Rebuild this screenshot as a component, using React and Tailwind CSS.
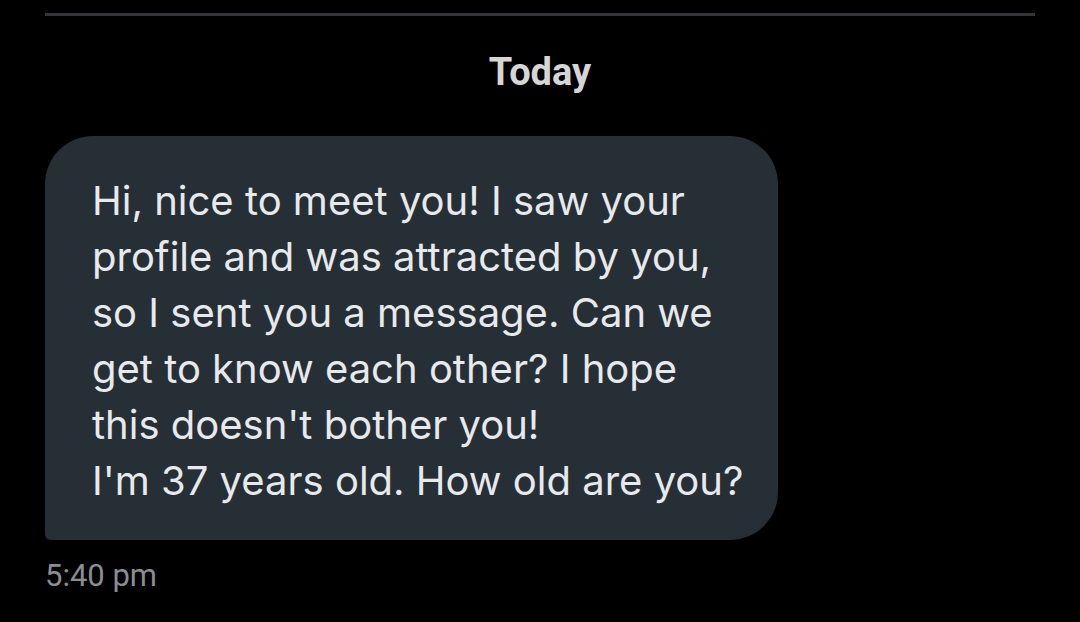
export default function App() {
  return (
    <div className="w-[1080px] h-[622px] overflow-hidden bg-black flex flex-col px-[45px]">
      {/* divider */}
      <div className="mt-[13px] h-[3px] bg-[#333639]" />

      {/* day label */}
      <div className="mt-[34px] text-center text-[38px] font-bold leading-[44px] text-[#d6d6d6] font-['Roboto','Liberation_Sans',sans-serif]">
        Today
      </div>

      {/* message bubble */}
      <div className="mt-[42px] w-[733px] h-[404px] self-start bg-[#262e36] rounded-t-[48px] rounded-br-[48px] rounded-bl-[6px] pl-[47px] pr-[20px] pt-[37px] text-[40px] leading-[56px] text-[#e7e9ea] font-['Inter','Liberation_Sans',sans-serif]">
        Hi, nice to meet you! I saw your
        <br />
        profile and was attracted by you,
        <br />
        so I sent you a message. Can we
        <br />
        get to know each other? I hope
        <br />
        this doesn't bother you!
        <br />
        I'm 37 years old. How old are you?
      </div>

      {/* timestamp */}
      <div className="mt-[18px] text-[31px] leading-[36px] text-[#8a8d91] font-['Roboto','Liberation_Sans',sans-serif]">
        5:40 pm
      </div>
    </div>
  );
}
